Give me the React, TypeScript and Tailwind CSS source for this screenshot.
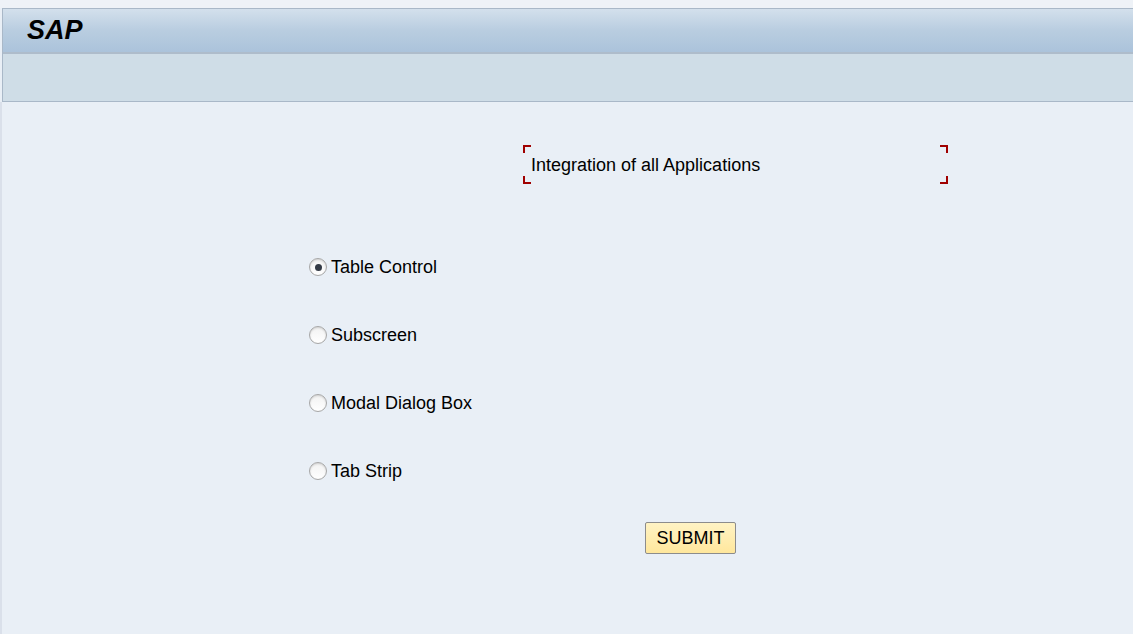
import { useState } from "react";

const options = ["Table Control", "Subscreen", "Modal Dialog Box", "Tab Strip"];

function Radio({ checked }: { checked: boolean }) {
  return (
    <span className="flex h-[18px] w-[18px] items-center justify-center rounded-full border border-[#a7a7a7] bg-gradient-to-b from-[#f2f2f2] to-white shadow-[inset_0_1px_2px_rgba(0,0,0,0.15)]">
      {checked && <span className="h-[7px] w-[7px] rounded-full bg-[#333a45]" />}
    </span>
  );
}

export default function App() {
  const [selected, setSelected] = useState(0);

  return (
    <div className="flex h-[634px] w-[1133px] flex-col bg-[#e9eff6] font-['Liberation_Sans',Tahoma,sans-serif] text-black">
      <div className="h-[8px] bg-[#eef2f7]" />
      <div className="ml-[2px] flex flex-col border-y border-l border-[#a9b8c8]">
        <header className="flex h-[43px] items-center bg-gradient-to-b from-[#d3e0ec] via-[#b9cde0] to-[#abc3db] pl-[24px]">
          <span className="text-[27px] font-bold italic leading-none">SAP</span>
        </header>
        <div className="h-[49px] border-t-2 border-[#aebccb] bg-[#cfdde7]" />
      </div>

      <main className="flex flex-1 flex-col border-l-2 border-[#dae0ea]">
        <div className="mt-[43px] ml-[521px] flex h-[39px] w-[425px] items-center justify-between">
          <div className="flex h-full items-center">
            <div className="flex h-full w-[8px] flex-col justify-between">
              <span className="h-[8px] w-[8px] border-t-2 border-l-2 border-[#a00000]" />
              <span className="h-[8px] w-[8px] border-b-2 border-l-2 border-[#a00000]" />
            </div>
            <span className="text-[18px] leading-none">Integration of all Applications</span>
          </div>
          <div className="flex h-full w-[8px] flex-col justify-between">
            <span className="h-[8px] w-[8px] border-t-2 border-r-2 border-[#a00000]" />
            <span className="h-[8px] w-[8px] border-b-2 border-r-2 border-[#a00000]" />
          </div>
        </div>

        <div className="mt-[74px] ml-[307px] flex flex-col gap-[50px]">
          {options.map((label, i) => (
            <label
              key={label}
              className="flex h-[18px] cursor-pointer items-center gap-[4px] text-[18px]"
              onClick={() => setSelected(i)}
            >
              <Radio checked={selected === i} />
              <span>{label}</span>
            </label>
          ))}
        </div>

        <div className="mt-[42px] ml-[643px]">
          <button className="h-[32px] w-[91px] rounded-[2px] border border-[#8c8c8c] bg-gradient-to-b from-[#fff3c4] to-[#ffe79c] text-[18px] leading-none">
            SUBMIT
          </button>
        </div>
      </main>
    </div>
  );
}
